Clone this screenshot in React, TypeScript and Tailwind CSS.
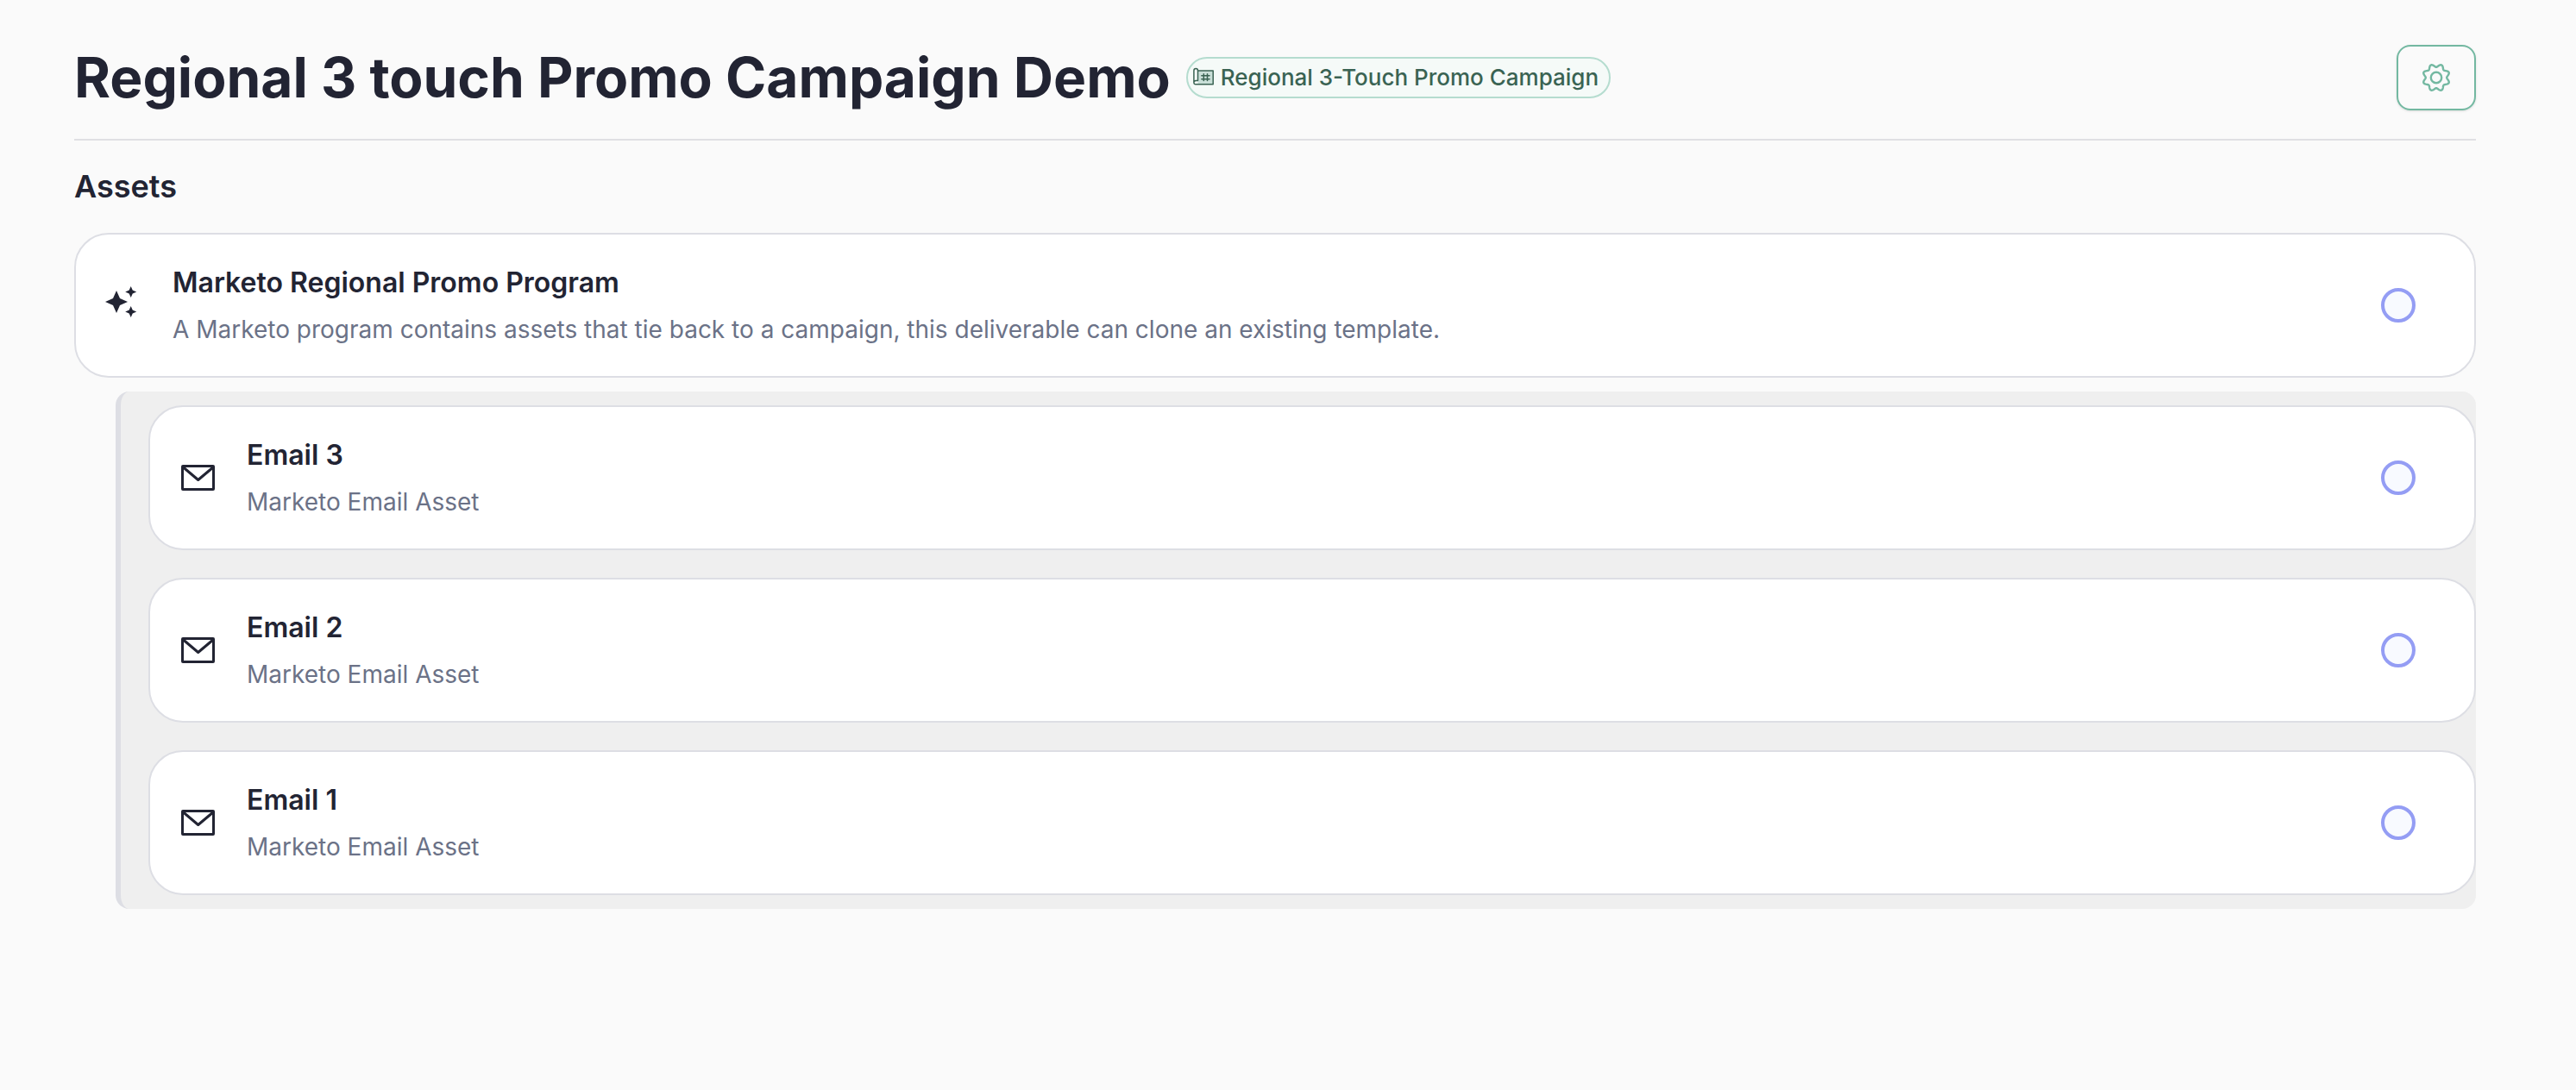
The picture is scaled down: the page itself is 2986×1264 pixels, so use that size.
import { useState } from 'react'

type Asset = {
  id: string
  title: string
  description: string
  kind: 'program' | 'email'
}

const PROGRAM: Asset = {
  id: 'program',
  title: 'Marketo Regional Promo Program',
  description: 'A Marketo program contains assets that tie back to a campaign, this deliverable can clone an existing template.',
  kind: 'program',
}

const EMAILS: Asset[] = [
  { id: 'email-3', title: 'Email 3', description: 'Marketo Email Asset', kind: 'email' },
  { id: 'email-2', title: 'Email 2', description: 'Marketo Email Asset', kind: 'email' },
  { id: 'email-1', title: 'Email 1', description: 'Marketo Email Asset', kind: 'email' },
]

function SparklesIcon() {
  return (
    <svg className="size-12 shrink-0" viewBox="0 0 48 48" fill="currentColor" aria-hidden="true">
      <path d="M15 7 L19 16 L28 20 L19 24 L15 33 L11 24 L2 20 L11 16 Z" />
      <path d="M31.7 2 L33.7 6.5 L38.2 8.5 L33.7 10.5 L31.7 15 L29.7 10.5 L25.2 8.5 L29.7 6.5 Z" />
      <path d="M31.7 25 L33.7 29.5 L38.2 31.5 L33.7 33.5 L31.7 38 L29.7 33.5 L25.2 31.5 L29.7 29.5 Z" />
    </svg>
  )
}

function EnvelopeIcon() {
  return (
    <svg className="size-12 shrink-0" viewBox="0 0 48 48" fill="none" stroke="currentColor" strokeWidth="3" strokeLinejoin="round" aria-hidden="true">
      <rect x="5.5" y="10.5" width="36" height="27" rx="0.5" />
      <path d="M6 11.5 L23.7 26.5 L41.5 11.5" />
    </svg>
  )
}

function BlueprintIcon() {
  return (
    <svg className="size-6 shrink-0" viewBox="0 0 24 24" fill="none" stroke="currentColor" strokeWidth="1.5" strokeLinejoin="round" strokeLinecap="round" aria-hidden="true">
      <path d="M5.5 4 H23.2 V19.8 H5.5 Z" fill="#c9dfd8" stroke="none" />
      <path d="M5.5 4 H23.2 V19.8 H2.8 C1.6 19.8 0.9 19 0.9 17.8 V4 C0.9 2.4 1.8 1.5 3.2 1.5 C4.6 1.5 5.5 2.4 5.5 4 V15.6 H3.2 C1.8 15.6 0.9 16.6 0.9 17.8" />
      <path d="M12.3 7.8 V15.6 M16.5 7.8 V15.6 M9.8 9.7 H19 M9.8 13.7 H19" />
    </svg>
  )
}

// eight rounded teeth around the hub
const GEAR_POINTS = Array.from({ length: 144 }, (_, i) => {
  const a = (i / 144) * Math.PI * 2
  const r = 14 - 1.8 * Math.cos(8 * a)
  return `${(18 + r * Math.sin(a)).toFixed(2)},${(18 - r * Math.cos(a)).toFixed(2)}`
}).join(' ')

function GearIcon() {
  return (
    <svg className="size-9" viewBox="0 0 36 36" fill="none" stroke="currentColor" strokeWidth="2.4" strokeLinejoin="round" aria-hidden="true">
      <polygon points={GEAR_POINTS} />
      <circle cx="18" cy="18" r="6.2" />
    </svg>
  )
}

function AssetCard({ asset, checked, onToggle }: { asset: Asset; checked: boolean; onToggle: () => void }) {
  return (
    <div className="flex items-center gap-8 rounded-[40px] border-2 border-[#dddee4] bg-white py-8 pr-17 pl-8">
      {asset.kind === 'program' ? <SparklesIcon /> : <EnvelopeIcon />}
      <label htmlFor={asset.id} className="flex min-w-0 flex-1 flex-col gap-2">
        <span className="text-[32px] leading-[48px] font-semibold">{asset.title}</span>
        <span className="text-[28px] leading-[44px] text-[#6b7287]">{asset.description}</span>
      </label>
      <input
        id={asset.id}
        type="checkbox"
        checked={checked}
        onChange={onToggle}
        className="size-10 shrink-0 cursor-pointer appearance-none rounded-full border-4 border-[#949df4] bg-[#f8faff] checked:bg-[#949df4]"
      />
    </div>
  )
}

export default function App() {
  const [done, setDone] = useState<string[]>([])

  const toggle = (id: string) => {
    setDone(done.includes(id) ? done.filter(d => d !== id) : [...done, id])
  }

  return (
    <main className="min-h-screen bg-[#fafafa] pt-13 pr-29 pb-16 pl-[86px] font-['Inter',sans-serif] text-[#222433]">
      {/* Header */}
      <header className="flex items-center justify-between border-b-2 border-[#dfdfe3] pb-[33px]">
        <div className="flex items-center gap-4.5">
          <h1 className="text-[64px] leading-[76px] font-bold">Regional 3 touch Promo Campaign Demo</h1>
          <span className="flex h-12 items-center gap-2 rounded-full border-2 border-[#b5dccf] bg-[#f5faf8] pr-3 pl-1.5 text-[26px] leading-8 font-medium text-[#3a6353]">
            <BlueprintIcon />
            Regional 3-Touch Promo Campaign
          </span>
        </div>
        <button
          type="button"
          aria-label="Settings"
          className="flex h-[76px] w-[92px] items-center justify-center rounded-2xl border-2 border-[#73b8a1] text-[#73b8a1] shadow-sm"
        >
          <GearIcon />
        </button>
      </header>

      {/* Assets */}
      <section>
        <h2 className="py-6.5 text-[36px] leading-[55px] font-semibold">Assets</h2>
        <AssetCard asset={PROGRAM} checked={done.includes(PROGRAM.id)} onToggle={() => toggle(PROGRAM.id)} />

        <div className="mt-4 ml-12 flex flex-col gap-8 rounded-2xl border-l-6 border-[#dddee4] bg-[#efefef] py-4 pl-8">
          {EMAILS.map(email => (
            <AssetCard key={email.id} asset={email} checked={done.includes(email.id)} onToggle={() => toggle(email.id)} />
          ))}
        </div>
      </section>
    </main>
  )
}
